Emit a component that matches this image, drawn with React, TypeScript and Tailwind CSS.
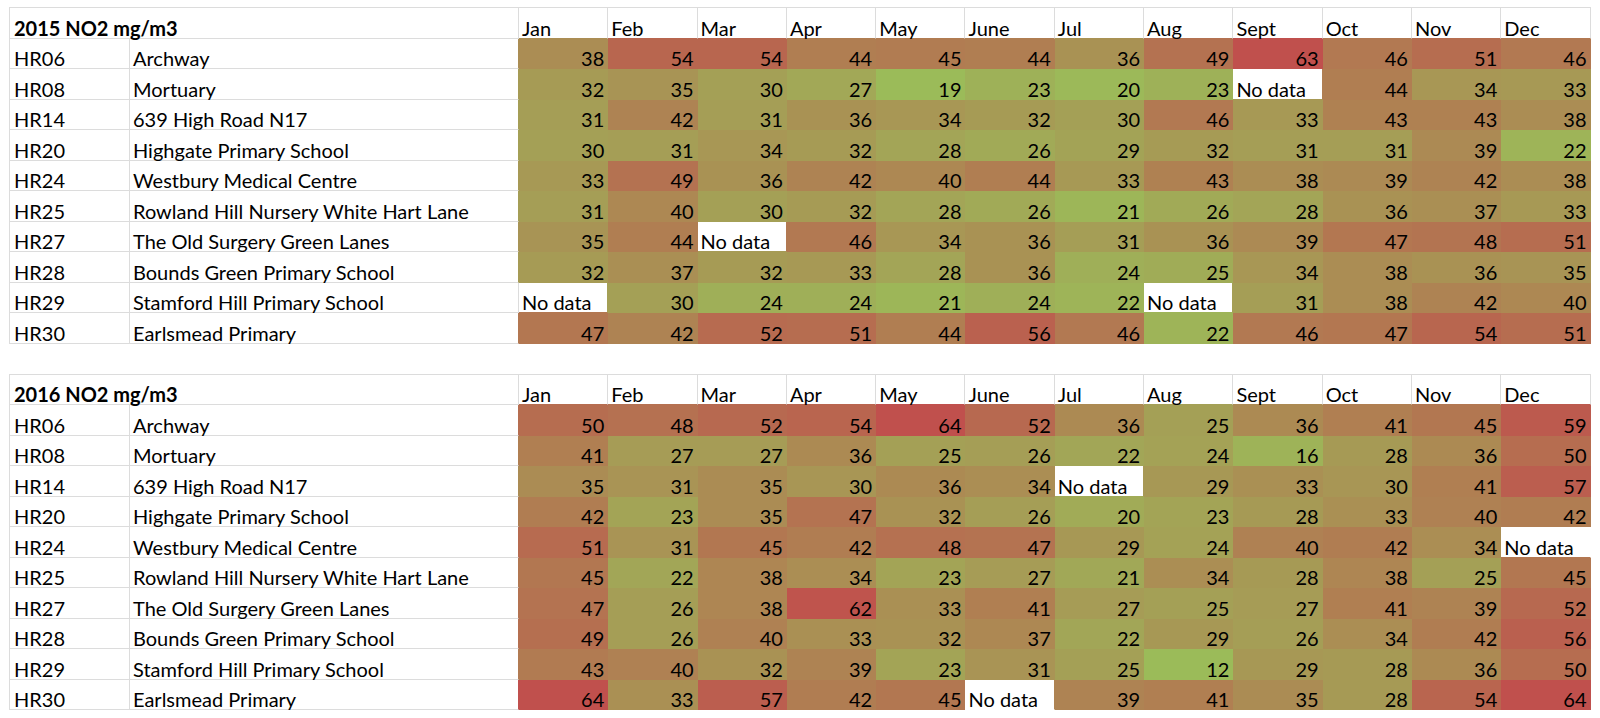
type Cell = number | null;

interface Site {
  code: string;
  name: string;
  values: Cell[];
}

interface YearTable {
  title: string;
  sites: Site[];
}

const MONTHS = ["Jan", "Feb", "Mar", "Apr", "May", "June", "Jul", "Aug", "Sept", "Oct", "Nov", "Dec"];

const N = null;

const TABLES: YearTable[] = [
  {
    title: "2015 NO2 mg/m3",
    sites: [
      { code: "HR06", name: "Archway", values: [38, 54, 54, 44, 45, 44, 36, 49, 63, 46, 51, 46] },
      { code: "HR08", name: "Mortuary", values: [32, 35, 30, 27, 19, 23, 20, 23, N, 44, 34, 33] },
      { code: "HR14", name: "639 High Road N17", values: [31, 42, 31, 36, 34, 32, 30, 46, 33, 43, 43, 38] },
      { code: "HR20", name: "Highgate Primary School", values: [30, 31, 34, 32, 28, 26, 29, 32, 31, 31, 39, 22] },
      { code: "HR24", name: "Westbury Medical Centre", values: [33, 49, 36, 42, 40, 44, 33, 43, 38, 39, 42, 38] },
      { code: "HR25", name: "Rowland Hill Nursery White Hart Lane", values: [31, 40, 30, 32, 28, 26, 21, 26, 28, 36, 37, 33] },
      { code: "HR27", name: "The Old Surgery Green Lanes", values: [35, 44, N, 46, 34, 36, 31, 36, 39, 47, 48, 51] },
      { code: "HR28", name: "Bounds Green Primary School", values: [32, 37, 32, 33, 28, 36, 24, 25, 34, 38, 36, 35] },
      { code: "HR29", name: "Stamford Hill Primary School", values: [N, 30, 24, 24, 21, 24, 22, N, 31, 38, 42, 40] },
      { code: "HR30", name: "Earlsmead Primary", values: [47, 42, 52, 51, 44, 56, 46, 22, 46, 47, 54, 51] },
    ],
  },
  {
    title: "2016 NO2 mg/m3",
    sites: [
      { code: "HR06", name: "Archway", values: [50, 48, 52, 54, 64, 52, 36, 25, 36, 41, 45, 59] },
      { code: "HR08", name: "Mortuary", values: [41, 27, 27, 36, 25, 26, 22, 24, 16, 28, 36, 50] },
      { code: "HR14", name: "639 High Road N17", values: [35, 31, 35, 30, 36, 34, N, 29, 33, 30, 41, 57] },
      { code: "HR20", name: "Highgate Primary School", values: [42, 23, 35, 47, 32, 26, 20, 23, 28, 33, 40, 42] },
      { code: "HR24", name: "Westbury Medical Centre", values: [51, 31, 45, 42, 48, 47, 29, 24, 40, 42, 34, N] },
      { code: "HR25", name: "Rowland Hill Nursery White Hart Lane", values: [45, 22, 38, 34, 23, 27, 21, 34, 28, 38, 25, 45] },
      { code: "HR27", name: "The Old Surgery Green Lanes", values: [47, 26, 38, 62, 33, 41, 27, 25, 27, 41, 39, 52] },
      { code: "HR28", name: "Bounds Green Primary School", values: [49, 26, 40, 33, 32, 37, 22, 29, 26, 34, 42, 56] },
      { code: "HR29", name: "Stamford Hill Primary School", values: [43, 40, 32, 39, 23, 31, 25, 12, 29, 28, 36, 50] },
      { code: "HR30", name: "Earlsmead Primary", values: [64, 33, 57, 42, 45, N, 39, 41, 35, 28, 54, 64] },
    ],
  },
];

const GRID = "#dcdcdc";
const LOW: [number, number, number] = [155, 187, 89];
const HIGH: [number, number, number] = [192, 80, 77];

// two-colour scale, min..max of the whole table
function scaleColor(v: number, min: number, max: number) {
  const t = max === min ? 0 : (v - min) / (max - min);
  const c = LOW.map((lo, i) => Math.round(lo + (HIGH[i] - lo) * t));
  return `rgb(${c[0]},${c[1]},${c[2]})`;
}

function HeatTable({ table }: Readonly<{ table: YearTable }>) {
  const nums = table.sites.flatMap((s) => s.values).filter((v): v is number => v !== null);
  const min = Math.min(...nums);
  const max = Math.max(...nums);
  const fill = (r: number, c: number): string | null => {
    const v = table.sites[r]?.values[c];
    return v === null || v === undefined ? null : scaleColor(v, min, max);
  };

  return (
    <div className="border-l border-t border-[#dcdcdc]">
      <div className="grid h-[30.5px] grid-cols-[120px_389px_repeat(12,89.3px)]">
        <div className="col-span-2 flex items-end whitespace-nowrap border-r border-b border-[#dcdcdc] pl-1 font-bold leading-none">
          {table.title}
        </div>
        {MONTHS.map((m, c) => (
          <div
            key={m}
            className="flex items-end border-r border-b pl-[3px] leading-none"
            style={{ borderRightColor: GRID, borderBottomColor: fill(0, c) ?? GRID }}
          >
            {m}
          </div>
        ))}
      </div>
      {table.sites.map((site, r) => (
        <div key={site.code} className="grid h-[30.5px] grid-cols-[120px_389px_repeat(12,89.3px)]">
          <div className="flex items-end border-r border-b border-[#dcdcdc] pl-1 leading-none">{site.code}</div>
          <div
            className="flex items-end whitespace-nowrap border-r border-b pl-[3px] leading-none"
            style={{ borderBottomColor: GRID, borderRightColor: fill(r, 0) ?? GRID }}
          >
            {site.name}
          </div>
          {site.values.map((v, c) => {
            const own = fill(r, c);
            const right = c < 11 ? fill(r, c + 1) : null;
            const below = fill(r + 1, c);
            return (
              <div
                key={c}
                className={
                  v === null
                    ? "flex items-end whitespace-nowrap border-r border-b bg-white pl-[3px] leading-none"
                    : "flex items-end justify-end border-r border-b pr-[3px] leading-none"
                }
                style={{
                  backgroundColor: own ?? undefined,
                  borderRightColor: own ?? right ?? "#ffffff",
                  borderBottomColor: own ?? below ?? "#ffffff",
                }}
              >
                {v === null ? "No data" : v}
              </div>
            );
          })}
        </div>
      ))}
    </div>
  );
}

export default function App() {
  return (
    <div className="min-h-[718px] w-[1600px] bg-white pl-[9px] pt-[7px] font-['Lato',sans-serif] text-[20px] text-black">
      <div className="flex w-max flex-col gap-[30px]">
        {TABLES.map((t) => (
          <HeatTable key={t.title} table={t} />
        ))}
      </div>
    </div>
  );
}
